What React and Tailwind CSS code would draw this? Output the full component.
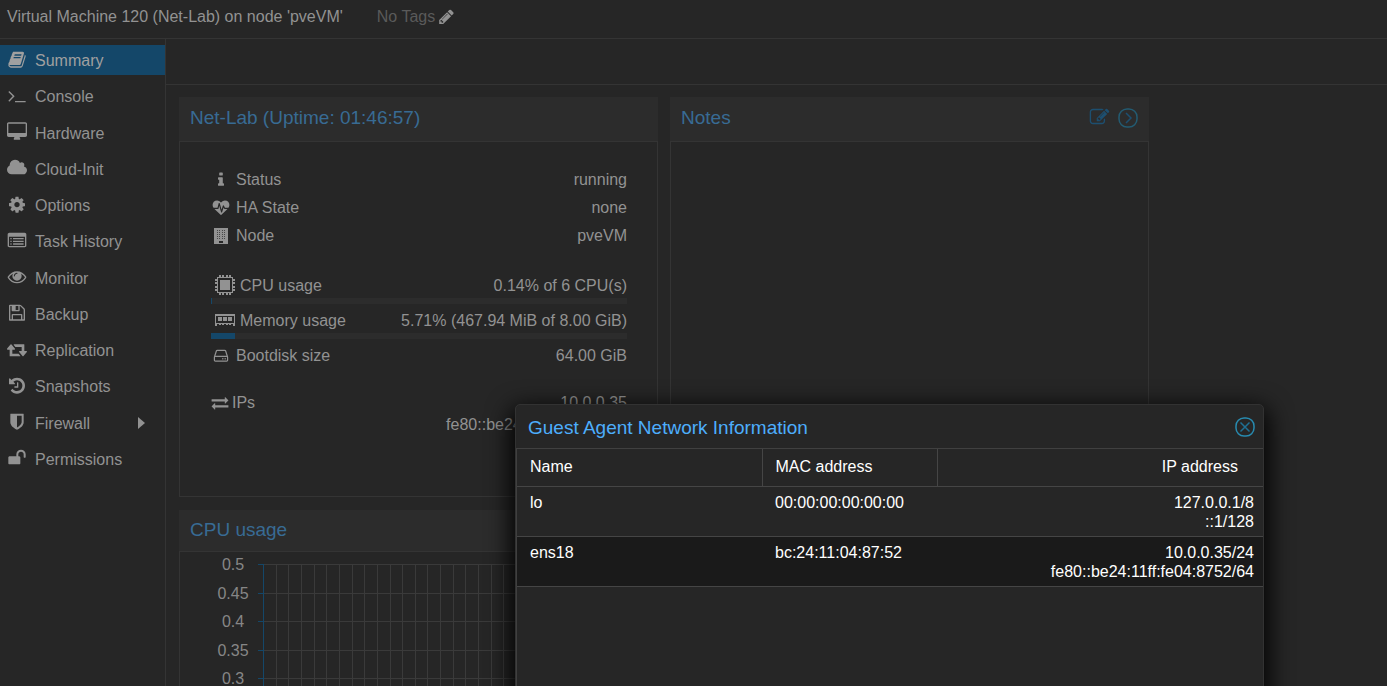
import React, { useState } from 'react';
import clsx from 'clsx';

const ICONS = {
  book: {
    w: 1792,
    d: 'M1703 478q40 57 18 129l-275 906q-19 64-76.5 107.5t-122.5 43.5h-923q-77 0-148.5-53.5t-99.5-131.5q-24-67-2-127 0-4 3-27t4-37q1-8-3-21.5t-3-19.5q2-11 8-21t16.5-23.5 16.5-23.5q23-38 45-91.5t30-91.5q3-10 .5-30t-.5-28q3-11 17-28t17-23q21-36 42-92t25-90q1-9-2.5-32t.5-28q4-13 22-30.5t22-22.5q19-26 42.5-84.5t27.5-96.5q1-8-3-25.5t-2-26.5q2-8 9-18t18-23 17-21q8-12 16.5-30.5t15-35 16-36 19.5-32 26.5-23.5 36-11.5 47.5 5.5l-1 3q38-9 51-9h761q74 0 114 56t18 130l-274 906q-36 119-71.5 153.5t-128.5 34.5h-869q-27 0-38 15-11 16-1 43 24 70 144 70h923q29 0 56-15.5t35-41.5l300-987q7-22 5-57 38 15 59 43zm-1064 2q-4 13 2 22.5t20 9.5h608q13 0 25.5-9.5t16.5-22.5l21-64q4-13-2-22.5t-20-9.5h-608q-13 0-25.5 9.5t-16.5 22.5zm-83 256q-4 13 2 22.5t20 9.5h608q13 0 25.5-9.5t16.5-22.5l21-64q4-13-2-22.5t-20-9.5h-608q-13 0-25.5 9.5t-16.5 22.5z',
  },
  terminal: {
    w: 1792,
    d: 'M649 983l-466 466q-10 10-23 10t-23-10l-50-50q-10-10-10-23t10-23l393-393-393-393q-10-10-10-23t10-23l50-50q10-10 23-10t23 10l466 466q10 10 10 23t-10 23zm1079 457v64q0 14-9 23t-23 9h-960q-14 0-23-9t-9-23v-64q0-14 9-23t23-9h960q14 0 23 9t9 23z',
  },
  desktop: {
    w: 1920,
    d: 'M1792 992v-832q0-13-9.5-22.5t-22.5-9.5h-1600q-13 0-22.5 9.5t-9.5 22.5v832q0 13 9.5 22.5t22.5 9.5h1600q13 0 22.5-9.5t9.5-22.5zm128-832v1088q0 66-47 113t-113 47h-544q0 37 16 77.5t32 71 16 43.5q0 26-19 45t-45 19h-512q-26 0-45-19t-19-45q0-14 16-44t32-70 16-78h-544q-66 0-113-47t-47-113v-1088q0-66 47-113t113-47h1600q66 0 113 47t47 113z',
  },
  cloud: {
    w: 1920,
    d: 'M1920 1152q0 159-112.5 271.5t-271.5 112.5h-1088q-185 0-316.5-131.5t-131.5-316.5q0-132 71-241.5t187-163.5q-2-28-2-43 0-212 150-362t362-150q158 0 286.5 88t187.5 230q70-62 166-62 106 0 181 75t75 181q0 75-41 138 129 30 213 134.5t84 239.5z',
  },
  cog: {
    w: 1792,
    d: 'M1152 896q0-106-75-181t-181-75-181 75-75 181 75 181 181 75 181-75 75-181zm512-109v222q0 12-8 23t-20 13l-185 28q-19 54-39 91 35 50 107 138 10 12 10 25t-9 23q-27 37-99 108t-94 71q-12 0-26-9l-138-108q-44 23-91 38-16 136-29 186-7 28-36 28h-222q-14 0-24.5-8.5t-11.5-21.5l-28-184q-49-16-90-37l-141 107q-10 9-25 9-14 0-25-11-126-114-165-168-7-10-7-23 0-12 8-23 15-21 51-66.5t54-70.5q-27-50-41-99l-183-27q-13-2-21-12.5t-8-23.5v-222q0-12 8-23t19-13l186-28q14-46 39-92-40-57-107-138-10-12-10-24 0-10 9-23 26-36 98.5-107.5t94.5-71.5q13 0 26 10l138 107q44-23 91-38 16-136 29-186 7-28 36-28h222q14 0 24.5 8.5t11.5 21.5l28 184q49 16 90 37l142-107q9-9 24-9 13 0 25 10 129 119 165 170 7 8 7 22 0 12-8 23-15 21-51 66.5t-54 70.5q26 50 41 98l183 28q13 2 21 12.5t8 23.5z',
  },
  list: {
    w: 1792,
    d: 'M384 1184v64q0 13-9.5 22.5t-22.5 9.5h-64q-13 0-22.5-9.5t-9.5-22.5v-64q0-13 9.5-22.5t22.5-9.5h64q13 0 22.5 9.5t9.5 22.5zm0-256v64q0 13-9.5 22.5t-22.5 9.5h-64q-13 0-22.5-9.5t-9.5-22.5v-64q0-13 9.5-22.5t22.5-9.5h64q13 0 22.5 9.5t9.5 22.5zm0-256v64q0 13-9.5 22.5t-22.5 9.5h-64q-13 0-22.5-9.5t-9.5-22.5v-64q0-13 9.5-22.5t22.5-9.5h64q13 0 22.5 9.5t9.5 22.5zm1152 512v64q0 13-9.5 22.5t-22.5 9.5h-960q-13 0-22.5-9.5t-9.5-22.5v-64q0-13 9.5-22.5t22.5-9.5h960q13 0 22.5 9.5t9.5 22.5zm0-256v64q0 13-9.5 22.5t-22.5 9.5h-960q-13 0-22.5-9.5t-9.5-22.5v-64q0-13 9.5-22.5t22.5-9.5h960q13 0 22.5 9.5t9.5 22.5zm0-256v64q0 13-9.5 22.5t-22.5 9.5h-960q-13 0-22.5-9.5t-9.5-22.5v-64q0-13 9.5-22.5t22.5-9.5h960q13 0 22.5 9.5t9.5 22.5zm128 704v-832q0-13-9.5-22.5t-22.5-9.5h-1472q-13 0-22.5 9.5t-9.5 22.5v832q0 13 9.5 22.5t22.5 9.5h1472q13 0 22.5-9.5t9.5-22.5zm128-1088v1088q0 66-47 113t-113 47h-1472q-66 0-113-47t-47-113v-1088q0-66 47-113t113-47h1472q66 0 113 47t47 113z',
  },
  eye: {
    w: 1792,
    d: 'M1664 960q-152-236-381-353 61 104 61 225 0 185-131.5 316.5t-316.5 131.5-316.5-131.5-131.5-316.5q0-121 61-225-229 117-381 353 133 205 333.5 326.5t434.5 121.5 434.5-121.5 333.5-326.5zm-720-384q0-20-14-34t-34-14q-125 0-214.5 89.5t-89.5 214.5q0 20 14 34t34 14 34-14 14-34q0-86 61-147t147-61q20 0 34-14t14-34zm848 384q0 34-20 69-140 230-376.5 368.5t-499.5 138.5-499.5-139-376.5-368q-20-35-20-69t20-69q140-229 376.5-368t499.5-139 499.5 139 376.5 368q20 35 20 69z',
  },
  floppy: {
    w: 1792,
    d: 'M512 1536h768v-384h-768v384zm896 0h128v-896q0-14-10-38.5t-20-34.5l-281-281q-10-10-34-20t-39-10v416q0 40-28 68t-68 28h-576q-40 0-68-28t-28-68v-416h-128v1280h128v-416q0-40 28-68t68-28h832q40 0 68 28t28 68v416zm-384-928v-320q0-13-9.5-22.5t-22.5-9.5h-192q-13 0-22.5 9.5t-9.5 22.5v320q0 13 9.5 22.5t22.5 9.5h192q13 0 22.5-9.5t9.5-22.5zm640 32v928q0 40-28 68t-68 28h-1344q-40 0-68-28t-28-68v-1344q0-40 28-68t68-28h928q40 0 88 20t76 48l280 280q28 28 48 76t20 88z',
  },
  retweet: {
    w: 1920,
    d: 'M1280 1504q0 13-9.5 22.5t-22.5 9.5h-960q-8 0-13.5-2t-9-7-5.5-8-3-11.5-1-11.5v-600h-192q-26 0-45-19t-19-45q0-24 15-41l320-384q19-22 49-22t49 22l320 384q15 17 15 41 0 26-19 45t-45 19h-192v384h576q16 0 25 11l160 192q7 10 7 21zm640-416q0 24-15 41l-320 384q-20 23-49 23t-49-23l-320-384q-15-17-15-41 0-26 19-45t45-19h192v-384h-576q-16 0-25-12l-160-192q-7-9-7-20 0-13 9.5-22.5t22.5-9.5h960q8 0 13.5 2t9 7 5.5 8 3 11.5 1 11.5v600h192q26 0 45 19t19 45z',
  },
  history: {
    w: 1792,
    d: 'M1664 896q0 156-61 298t-164 245-245 164-298 61q-172 0-327-72.5t-264-204.5q-7-10-6.5-22.5t8.5-20.5l137-138q10-9 25-9 16 2 23 12 73 95 179 147t225 52q104 0 198.5-40.5t163.5-109.5 109.5-163.5 40.5-198.5-40.5-198.5-109.5-163.5-163.5-109.5-198.5-40.5q-98 0-188 35.5t-160 101.5l137 138q31 30 14 69-17 40-59 40h-448q-26 0-45-19t-19-45v-448q0-42 40-59 39-17 69 14l130 129q107-101 244.5-156.5t284.5-55.5q156 0 298 61t245 164 164 245 61 298zm-640-288v448q0 14-9 23t-23 9h-320q-14 0-23-9t-9-23v-64q0-14 9-23t23-9h224v-352q0-14 9-23t23-9h64q14 0 23 9t9 23z',
  },
  shield: {
    w: 1792,
    d: 'M1344 960v-640h-448v1137q119-63 213-137 235-184 235-360zm192-768v768q0 86-33.5 170.5t-83 150-118 127.5-126.5 103-121 77.5-89.5 49.5-42.5 20q-12 6-26 6t-26-6q-16-7-42.5-20t-89.5-49.5-121-77.5-126.5-103-118-127.5-83-150-33.5-170.5v-768q0-26 19-45t45-19h1152q26 0 45 19t19 45z',
  },
  unlock: {
    w: 1792,
    d: 'M1728 576v256q0 26-19 45t-45 19h-64q-26 0-45-19t-19-45v-256q0-106-75-181t-181-75-181 75-75 181v192h96q40 0 68 28t28 68v576q0 40-28 68t-68 28h-960q-40 0-68-28t-28-68v-576q0-40 28-68t68-28h672v-192q0-185 131.5-316.5t316.5-131.5 316.5 131.5 131.5 316.5z',
  },
  pencil: {
    w: 1792,
    d: 'M491 1536l91-91-235-235-91 91v107h128v128h107zm523-928q0-22-22-22-10 0-17 7l-542 542q-7 7-7 17 0 22 22 22 10 0 17-7l542-542q7-7 7-17zm-54-192l416 416-832 832h-416v-416zm683 96q0 53-37 90l-166 166-416-416 166-165q36-38 90-38 53 0 91 38l235 234q37 39 37 91z',
  },
  edit: {
    w: 1792,
    d: 'M888 1184l116-116-152-152-116 116v56h96v96h56zm440-720q-16-16-33 1l-350 350q-17 17-1 33t33-1l350-350q17-17 1-33zm80 594v190q0 119-84.5 203.5t-203.5 84.5h-832q-119 0-203.5-84.5t-84.5-203.5v-832q0-119 84.5-203.5t203.5-84.5h832q63 0 117 25 15 7 18 23 3 17-9 29l-49 49q-14 14-32 8-23-6-45-6h-832q-66 0-113 47t-47 113v832q0 66 47 113t113 47h832q66 0 113-47t47-113v-126q0-13 9-22l64-64q15-15 35-7t20 29zm-96-738l288 288-672 672h-288v-288zm444 132l-92 92-288-288 92-92q28-28 68-28t68 28l152 152q28 28 28 68t-28 68z',
  },
  info: {
    w: 1792,
    d: 'M1216 1344v128q0 26-19 45t-45 19h-512q-26 0-45-19t-19-45v-128q0-26 19-45t45-19h64v-384h-64q-26 0-45-19t-19-45v-128q0-26 19-45t45-19h384q26 0 45 19t19 45v576h64q26 0 45 19t19 45zm-128-1152v192q0 26-19 45t-45 19h-256q-26 0-45-19t-19-45v-192q0-26 19-45t45-19h256q26 0 45 19t19 45z',
  },
  heartbeat: {
    w: 1792,
    d: 'M1280 1024h305q-5 6-10 10.5t-9 7.5l-3 4-623 600q-18 18-44 18t-44-18l-624-602q-5-2-21-20h369q22 0 39.5-13.5t22.5-34.5l70-281 190 667q6 20 23 33t39 13q21 0 38-13t23-33l146-485 56 112q18 35 57 35zm512-428q0 145-103 300h-369l-111-221q-8-17-25.5-27t-36.5-8q-45 5-56 46l-129 430-196-686q-6-20-23.5-33t-39.5-13-39 13.5-22 34.5l-116 464h-423q-103-155-103-300 0-220 127-344t351-124q62 0 126.5 21.5t120 58 95.5 68.5 76 68q36-36 76-68t95.5-68.5 120-58 126.5-21.5q224 0 351 124t127 344z',
  },
  hdd: {
    w: 1792,
    d: 'M1168 1216q0 33-23.5 56.5t-56.5 23.5-56.5-23.5-23.5-56.5 23.5-56.5 56.5-23.5 56.5 23.5 23.5 56.5zm256 0q0 33-23.5 56.5t-56.5 23.5-56.5-23.5-23.5-56.5 23.5-56.5 56.5-23.5 56.5 23.5 23.5 56.5zm112 160v-320q0-13-9.5-22.5t-22.5-9.5h-1216q-13 0-22.5 9.5t-9.5 22.5v320q0 13 9.5 22.5t22.5 9.5h1216q13 0 22.5-9.5t9.5-22.5zm-1230-480h1180l-157-482q-4-13-16-21.5t-26-8.5h-782q-14 0-26 8.5t-16 21.5zm1358 160v320q0 66-47 113t-113 47h-1216q-66 0-113-47t-47-113v-320q0-25 16-75l197-606q17-53 63-86t101-33h782q55 0 101 33t63 86l197 606q16 50 16 75z',
  },
  exchange: {
    w: 1792,
    d: 'M1792 1184v192q0 13-9.5 22.5t-22.5 9.5h-1376v192q0 13-9.5 22.5t-22.5 9.5q-12 0-24-10l-319-320q-9-9-9-22 0-14 9-23l320-320q9-9 23-9 13 0 22.5 9.5t9.5 22.5v192h1376q13 0 22.5 9.5t9.5 22.5zm0-544q0 14-9 23l-320 320q-9 9-23 9-13 0-22.5-9.5t-9.5-22.5v-192h-1376q-13 0-22.5-9.5t-9.5-22.5v-192q0-13 9.5-22.5t22.5-9.5h1376v-192q0-14 9-23t23-9q12 0 24 10l319 319q9 9 9 23z',
  },
};

const Icon = ({ name, className }) => {
  const { w, d } = ICONS[name];
  return (
    <svg
      viewBox={w === 1920 ? '0 80 1920 1792' : '-64 80 1920 1792'}
      fill="currentColor"
      aria-hidden="true"
      className={clsx('shrink-0 overflow-visible', className)}
    >
      <path d={d} />
    </svg>
  );
};

const BuildingIcon = () => (
  <svg viewBox="0 0 14 16" fill="currentColor" aria-hidden="true" className="h-4 w-[14px]">
    <path fillRule="evenodd" d="M0 0h14v16H0zM5 13v2h4v-2z" />
    {[2, 4, 6, 8, 10].map(y => (
      <path key={y} d={`M3 ${y}h1v1h-1zM5 ${y}h1v1h-1zM8 ${y}h1v1h-1zM10 ${y}h1v1h-1z`} fill="#484848" />
    ))}
  </svg>
);

const CpuIcon = () => (
  <svg viewBox="0 0 20 20" fill="currentColor" aria-hidden="true" className="size-5">
    <path d="M5 5h10v10H5z" />
    <path fillRule="evenodd" d="M2 2h16v16H2zM3 3v14h14V3z" />
    {[4, 7, 11, 14].map(p => (
      <path key={p} d={`M${p} 0h2v2h-2zM${p} 18h2v2h-2zM0 ${p}h2v2h-2zM18 ${p}h2v2h-2z`} />
    ))}
  </svg>
);

const MemoryIcon = () => (
  <svg viewBox="0 0 20 12" fill="currentColor" aria-hidden="true" className="h-3 w-5">
    <path fillRule="evenodd" d="M0 0h20v10H0zM1 2v7h18V2z" />
    <path d="M3 3h4v4H3zM8 3h4v4H8zM13 3h4v4h-4zM0 10h2v2H0zM4 10h2v1H4zM7 10h2v1H7zM11 10h2v1h-2zM14 10h2v1h-2zM18 10h2v2h-2z" />
  </svg>
);

const navItems = [
  { label: 'Summary', icon: 'book', active: true },
  { label: 'Console', icon: 'terminal' },
  { label: 'Hardware', icon: 'desktop' },
  { label: 'Cloud-Init', icon: 'cloud' },
  { label: 'Options', icon: 'cog' },
  { label: 'Task History', icon: 'list' },
  { label: 'Monitor', icon: 'eye' },
  { label: 'Backup', icon: 'floppy' },
  { label: 'Replication', icon: 'retweet' },
  { label: 'Snapshots', icon: 'history' },
  { label: 'Firewall', icon: 'shield', expandable: true },
  { label: 'Permissions', icon: 'unlock' },
];

const interfaces = [
  { name: 'lo', mac: '00:00:00:00:00:00', ips: ['127.0.0.1/8', '::1/128'] },
  { name: 'ens18', mac: 'bc:24:11:04:87:52', ips: ['10.0.0.35/24', 'fe80::be24:11ff:fe04:8752/64'] },
];

const Sidebar = () => (
  <nav className="w-[166px] shrink-0 border-r border-[#343434] pt-[6px]">
    <ul className="flex h-[429px] flex-col justify-between">
      {navItems.map(item => (
        <li key={item.label}>
          <a
            href="#"
            className={clsx('flex h-[30px] items-center gap-2 pl-[7px] pr-5', item.active && 'bg-[#144769] text-[#a0a0a0]')}
          >
            <Icon name={item.icon} className="h-[19px] w-5" />
            <span className="grow pt-[2px]">{item.label}</span>
            {item.expandable && (
              <svg viewBox="0 0 8 12" fill="currentColor" aria-hidden="true" className="h-3 w-2">
                <path d="M1 0l7 6-7 6z" />
              </svg>
            )}
          </a>
        </li>
      ))}
    </ul>
  </nav>
);

const Panel = ({ title, tools, headerClass = 'h-11', className, children }) => (
  <section className={clsx('flex flex-col', className)}>
    <header className={clsx('flex shrink-0 items-center justify-between bg-[#2c2c2c] px-[11px] pb-[2px]', headerClass)}>
      <h2 className="text-[19px] text-[#386b94]">{title}</h2>
      {tools}
    </header>
    <div className="grow border border-[#343434]">{children}</div>
  </section>
);

const StatusRow = ({ icon, label, value }) => (
  <div className="flex h-7 items-center">
    <span className="mr-[5px] flex w-5 justify-center">{icon}</span>
    <span className="grow">{label}</span>
    <span>{value}</span>
  </div>
);

const UsageRow = ({ icon, label, value, percent }) => (
  <div className="mb-[3px]">
    <div className="flex h-[26px] items-center pl-1">
      <span className="mr-[5px]">{icon}</span>
      <span className="grow pt-[2px]">{label}</span>
      <span className="pt-[2px]">{value}</span>
    </div>
    <div className="h-[6px] bg-[#2c2c2c]">
      <div className="h-full min-w-px bg-[#144769]" style={{ width: `${percent}%` }} />
    </div>
  </div>
);

const CpuChart = () => {
  const ticks = ['0.5', '0.45', '0.4', '0.35', '0.3'];
  const columns = Array.from({ length: 68 }, (_, i) => Math.round(84 + (i + 1) * 12.65));
  return (
    <svg viewBox="0 0 968 134" className="h-[134px] w-[968px]" role="img" aria-label="CPU usage">
      {ticks.map((t, i) => {
        const y = Math.round(12 + i * 28.5);
        return (
          <g key={t}>
            <path d={`M84 ${y + 0.5}H946`} stroke="#3a3a3a" />
            <path d={`M78 ${y + 0.5}h5`} stroke="#144769" />
            <text x="53" y={y + 6} textAnchor="middle" fontSize="16" fill="#868686">{t}</text>
          </g>
        );
      })}
      {columns.map(x => <path key={x} d={`M${x - 0.5} 12V134`} stroke="#3a3a3a" />)}
      <path d="M83.5 12V134" stroke="#144769" />
    </svg>
  );
};

const NetworkDialog = ({ onClose }) => (
  <div
    role="dialog"
    aria-labelledby="dialog-title"
    className="absolute bottom-[-200px] left-[515px] top-[404px] w-[749px] rounded-t-[5px] border border-[#323232] bg-[#262626] shadow-[0_8px_24px_4px_#000]"
  >
    <header className="flex h-[43px] items-center justify-between pl-3 pr-2">
      <h2 id="dialog-title" className="pt-[2px] text-[19px] text-[#4daefc]">Guest Agent Network Information</h2>
      <button type="button" aria-label="Close" onClick={onClose} className="text-[#1f7094]">
        <svg viewBox="0 0 20 20" fill="none" stroke="currentColor" className="size-5">
          <rect x="1" y="1" width="18" height="18" rx="8" stroke="#288bb0" strokeWidth="1.5" />
          <path d="M5.5 5.5l9 9M14.5 5.5l-9 9" strokeWidth="1.5" />
        </svg>
      </button>
    </header>
    <div className="h-full border-l border-t border-[#404040]">
      <table className="w-full table-fixed border-collapse text-left text-white">
        <thead>
          <tr className="h-[37px] border-b border-[#454545]">
            <th className="w-[245px] border-r border-[#454545] px-[13px] font-normal">Name</th>
            <th className="w-[175px] border-r border-[#454545] px-[13px] font-normal">MAC address</th>
            <th className="pr-[25px] text-right font-normal">IP address</th>
          </tr>
        </thead>
        <tbody>
          {interfaces.map((iface, idx) => (
            <tr key={iface.name} className={clsx('h-[50px] border-b border-[#454545] align-top leading-[19px]', idx % 2 === 1 && 'bg-[#1a1a1a]')}>
              <td className="px-[13px] pt-[6px]">{iface.name}</td>
              <td className="px-[13px] pt-[6px]">{iface.mac}</td>
              <td className="pr-[9px] pt-[6px] text-right">
                {iface.ips.map(ip => <div key={ip}>{ip}</div>)}
              </td>
            </tr>
          ))}
        </tbody>
      </table>
    </div>
  </div>
);

const App = () => {
  const [dialogOpen, setDialogOpen] = useState(true);

  return (
    <div className="relative flex h-screen flex-col overflow-hidden bg-[#262626] font-['Liberation_Sans',Arial,sans-serif] text-[16px] leading-[22px] text-[#929292]">
      <header className="flex h-[39px] shrink-0 items-center border-b border-[#343434] pb-1 pl-[7px]">
        <h1>Virtual Machine 120 (Net-Lab) on node 'pveVM'</h1>
        <span className="ml-[34px] text-[#5a5a5a]">No Tags</span>
        <button type="button" aria-label="Edit tags" className="ml-[2px]">
          <Icon name="pencil" className="h-[17px] w-[19px]" />
        </button>
      </header>

      <div className="flex min-h-0 grow">
        <Sidebar />
        <main className="min-w-0 grow">
          <div className="h-[46px] border-b border-[#343434]" />
          <div className="flex flex-col gap-[13px] p-3 pl-[13px]">
            <div className="flex gap-3">
              <Panel title="Net-Lab (Uptime: 01:46:57)" className="h-[400px] w-[479px]">
                <div className="pl-[31px] pr-[30px] pt-6">
                  <StatusRow icon={<Icon name="info" className="h-[17px] w-[18px]" />} label="Status" value="running" />
                  <StatusRow icon={<Icon name="heartbeat" className="h-[17px] w-[18px]" />} label="HA State" value="none" />
                  <StatusRow icon={<BuildingIcon />} label="Node" value="pveVM" />
                  <div className="mt-[22px]">
                    <UsageRow icon={<CpuIcon />} label="CPU usage" value="0.14% of 6 CPU(s)" percent={0.14} />
                    <UsageRow icon={<MemoryIcon />} label="Memory usage" value="5.71% (467.94 MiB of 8.00 GiB)" percent={5.71} />
                  </div>
                  <StatusRow icon={<Icon name="hdd" className="h-[17px] w-[18px]" />} label="Bootdisk size" value="64.00 GiB" />
                  <div className="mt-[22px] flex items-start">
                    <span className="flex h-[22px] items-center">
                      <Icon name="exchange" className="mr-[3px] h-[17px] w-[18px]" />
                      IPs
                    </span>
                    <div className="grow text-right">
                      <div>10.0.0.35</div>
                      <div>fe80::be24:11ff:fe04:8752</div>
                    </div>
                  </div>
                </div>
              </Panel>
              <Panel
                title="Notes"
                className="h-[400px] w-[479px]"
                tools={
                  <div className="flex items-center gap-2 text-[#1d4f70]">
                    <button type="button" aria-label="Edit notes">
                      <Icon name="edit" className="h-5 w-[21px]" />
                    </button>
                    <button type="button" aria-label="Expand notes">
                      <svg viewBox="0 0 20 20" fill="none" stroke="currentColor" className="size-5">
                        <rect x="1" y="1" width="18" height="18" rx="8" stroke="#235b72" strokeWidth="1.5" />
                        <path d="M8 5l5 5-5 5" strokeWidth="1.5" />
                      </svg>
                    </button>
                  </div>
                }
              />
            </div>
            <Panel title="CPU usage" headerClass="h-[41px]" className="w-[970px]">
              <CpuChart />
            </Panel>
          </div>
        </main>
      </div>

      {dialogOpen && <NetworkDialog onClose={() => setDialogOpen(false)} />}
    </div>
  );
};

export default App;
